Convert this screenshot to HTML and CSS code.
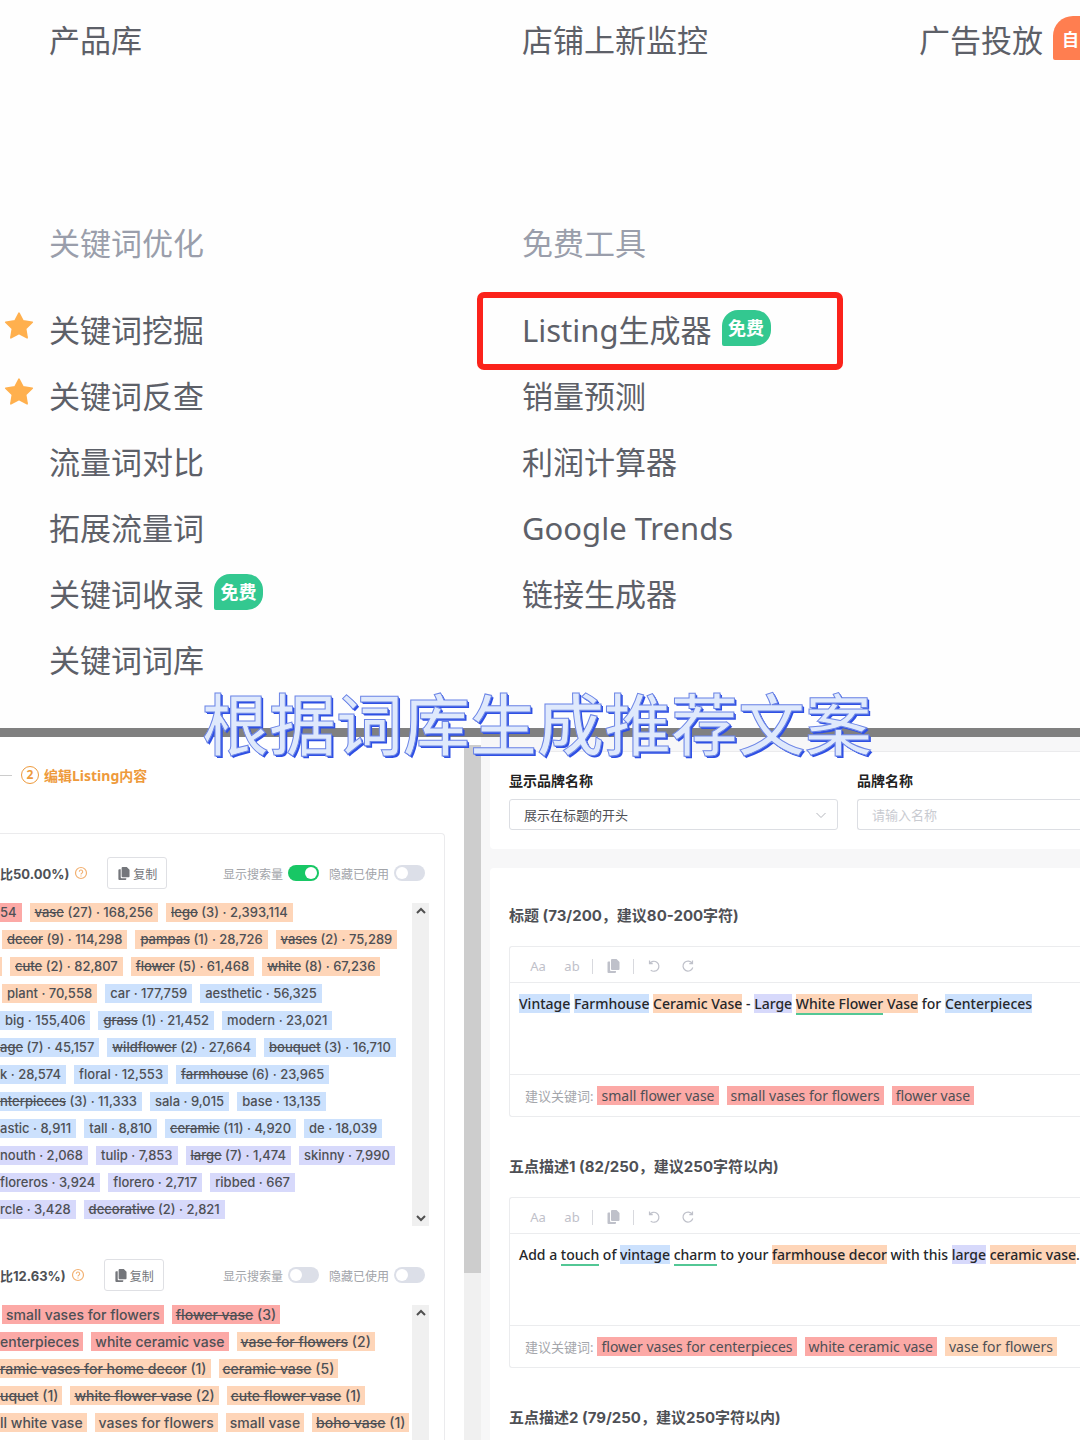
FILE: index.html
```html
<!DOCTYPE html>
<html lang="zh-CN">
<head>
<meta charset="utf-8">
<meta name="viewport" content="width=device-width, initial-scale=1">
<title>Listing生成器</title>
<link rel="stylesheet" href="styles.css">
</head>
<body>
<svg class="sprite" aria-hidden="true">
  <symbol id="star" viewBox="0 0 28 28"><path d="M14 2l3.800 7.200 8.600 1.300-6.200 6 1.400 8.500-7.600-4-7.600 4 1.400-8.500-6.200-6 8.600-1.300z" fill="#ffb04e" stroke="#ffb04e" stroke-width="1.500" stroke-linejoin="round"/></symbol>
  <symbol id="copy" viewBox="0 0 14 14"><path d="M6 0h4.500l3 3v7a1 1 0 0 1-1 1h-6.500a1 1 0 0 1-1-1v-9a1 1 0 0 1 1-1z" fill="currentColor"/><path d="M4 2.500h-1.500a1 1 0 0 0-1 1v9.500a1 1 0 0 0 1 1h6.500a1 1 0 0 0 1-1v-1h-5a1 1 0 0 1-1-1z" fill="currentColor"/></symbol>
  <symbol id="undo" viewBox="0 0 14 14"><path d="M2.500 1.500v3.200h3.200M2.700 4.500a5 5 0 1 1 1 6.600" fill="none" stroke="currentColor" stroke-width="1.200"/></symbol>
  <symbol id="redo" viewBox="0 0 14 14"><path d="M11.500 1.500v3.200h-3.200M11.300 4.500a5 5 0 1 0 .5 4" fill="none" stroke="currentColor" stroke-width="1.200"/></symbol>
  <symbol id="help" viewBox="0 0 14 14"><circle cx="7" cy="7" r="5.500" fill="none" stroke="#f2b071" stroke-width="1.200"/><path d="M5.300 5.700a1.700 1.700 0 1 1 2.500 1.500q-.8.400-.8 1.200M7 9.400v1.100" fill="none" stroke="#f2b071" stroke-width="1.100"/></symbol>
  <symbol id="up" viewBox="0 0 10 10"><path d="M1 7l4-4 4 4" fill="none" stroke="currentColor" stroke-width="2"/></symbol>
  <symbol id="down" viewBox="0 0 10 10"><path d="M1 3l4 4 4-4" fill="none" stroke="currentColor" stroke-width="2"/></symbol>
  <symbol id="chevron" viewBox="0 0 10 10"><path d="M.5 3l4.500 4.500 4.500-4.500" fill="none" stroke="currentColor"/></symbol>
</svg>

<nav class="menu">
  <a class="menu-link" href="#">产品库</a>
  <a class="menu-link" href="#">店铺上新监控</a>
  <a class="menu-link" href="#">广告投放<span class="badge badge-hot">自</span></a>

  <section class="group">
    <h2 class="group-title">关键词优化</h2>
    <ul class="group-list">
      <li><svg class="star"><use href="#star"/></svg><a class="menu-link" href="#">关键词挖掘</a></li>
      <li><svg class="star"><use href="#star"/></svg><a class="menu-link" href="#">关键词反查</a></li>
      <li><a class="menu-link" href="#">流量词对比</a></li>
      <li><a class="menu-link" href="#">拓展流量词</a></li>
      <li><a class="menu-link" href="#">关键词收录<span class="badge">免费</span></a></li>
      <li><a class="menu-link" href="#">关键词词库</a></li>
    </ul>
  </section>
  <section class="group">
    <h2 class="group-title">免费工具</h2>
    <ul class="group-list">
      <li><a class="menu-link" href="#">Listing生成器<span class="badge">免费</span></a><span class="marker"></span></li>
      <li><a class="menu-link" href="#">销量预测</a></li>
      <li><a class="menu-link" href="#">利润计算器</a></li>
      <li><a class="menu-link" href="#">Google Trends</a></li>
      <li><a class="menu-link" href="#">链接生成器</a></li>
    </ul>
  </section>
</nav>

<div class="divider"><p class="caption">根据词库生成推荐文案</p></div>

<main class="workspace">
  <aside class="keywords">
    <div class="step"><span class="step-line"></span><span class="step-num">2</span><span>编辑Listing内容</span></div>
    <div class="panel">
      <header class="panel-head">
        <strong>比50.00%)</strong><svg class="help"><use href="#help"/></svg>
        <button class="copy-btn" type="button"><svg><use href="#copy"/></svg>复制</button>
        <span class="toggles">
          <label>显示搜索量<input class="switch" type="checkbox" checked></label>
          <label>隐藏已使用<input class="switch" type="checkbox"></label>
        </span>
      </header>
      <div class="scroller">
        <div class="rows words">
          <div class="row"><span class="tag red cut">54</span><span class="tag orange"><s>vase</s> (27) · 168,256</span><span class="tag orange"><s>lego</s> (3) · 2,393,114</span></div>
          <div class="row"><span class="tag gap"></span><span class="tag orange"><s>decor</s> (9) · 114,298</span><span class="tag orange"><s>pampas</s> (1) · 28,726</span><span class="tag orange"><s>vases</s> (2) · 75,289</span></div>
          <div class="row"><span class="tag orange sliver"></span><span class="tag orange"><s>cute</s> (2) · 82,807</span><span class="tag orange"><s>flower</s> (5) · 61,468</span><span class="tag orange"><s>white</s> (8) · 67,236</span></div>
          <div class="row"><span class="tag gap"></span><span class="tag orange">plant · 70,558</span><span class="tag blue">car · 177,759</span><span class="tag blue">aesthetic · 56,325</span></div>
          <div class="row"><span class="tag blue">big · 155,406</span><span class="tag blue"><s>grass</s> (1) · 21,452</span><span class="tag blue">modern · 23,021</span></div>
          <div class="row"><span class="tag blue cut"><s>age</s> (7) · 45,157</span><span class="tag blue"><s>wildflower</s> (2) · 27,664</span><span class="tag blue"><s>bouquet</s> (3) · 16,710</span></div>
          <div class="row"><span class="tag blue cut">k · 28,574</span><span class="tag blue">floral · 12,553</span><span class="tag blue"><s>farmhouse</s> (6) · 23,965</span></div>
          <div class="row"><span class="tag blue cut"><s>nterpieces</s> (3) · 11,333</span><span class="tag blue">sala · 9,015</span><span class="tag blue">base · 13,135</span></div>
          <div class="row"><span class="tag blue cut">astic · 8,911</span><span class="tag blue">tall · 8,810</span><span class="tag blue"><s>ceramic</s> (11) · 4,920</span><span class="tag blue">de · 18,039</span></div>
          <div class="row"><span class="tag violet cut">nouth · 2,068</span><span class="tag violet">tulip · 7,853</span><span class="tag violet"><s>large</s> (7) · 1,474</span><span class="tag violet">skinny · 7,990</span></div>
          <div class="row"><span class="tag violet cut">floreros · 3,924</span><span class="tag violet">florero · 2,717</span><span class="tag violet">ribbed · 667</span></div>
          <div class="row"><span class="tag violet cut">rcle · 3,428</span><span class="tag violet"><s>decorative</s> (2) · 2,821</span></div>
        </div>
        <div class="bar"><svg><use href="#up"/></svg><svg><use href="#down"/></svg></div>
      </div>

      <header class="panel-head">
        <strong>比12.63%)</strong><svg class="help"><use href="#help"/></svg>
        <button class="copy-btn" type="button"><svg><use href="#copy"/></svg>复制</button>
        <span class="toggles">
          <label>显示搜索量<input class="switch" type="checkbox"></label>
          <label>隐藏已使用<input class="switch" type="checkbox"></label>
        </span>
      </header>
      <div class="scroller">
        <div class="rows phrases">
          <div class="row"><span class="tag gap"></span><span class="tag red">small vases for flowers</span><span class="tag red"><s>flower vase</s> (3)</span></div>
          <div class="row"><span class="tag red cut">enterpieces</span><span class="tag red">white ceramic vase</span><span class="tag orange"><s>vase for flowers</s> (2)</span></div>
          <div class="row"><span class="tag orange cut"><s>ramic vases for home decor</s> (1)</span><span class="tag orange"><s>ceramic vase</s> (5)</span></div>
          <div class="row"><span class="tag orange cut"><s>uquet</s> (1)</span><span class="tag orange"><s>white flower vase</s> (2)</span><span class="tag orange"><s>cute flower vase</s> (1)</span></div>
          <div class="row"><span class="tag orange cut">ll white vase</span><span class="tag orange">vases for flowers</span><span class="tag orange">small vase</span><span class="tag orange"><s>boho vase</s> (1)</span></div>
        </div>
        <div class="bar"><svg><use href="#up"/></svg></div>
      </div>
    </div>
  </aside>

  <div class="page-bar"></div>

  <section class="editor">
    <form class="card brand">
      <div class="field">
        <label for="brand-pos">显示品牌名称</label>
        <span class="select-wrap"><select id="brand-pos" class="control"><option>展示在标题的开头</option></select><svg class="chevron"><use href="#chevron"/></svg></span>
      </div>
      <div class="field">
        <label for="brand-name">品牌名称</label>
        <input id="brand-name" class="control control-open" type="text" placeholder="请输入名称">
      </div>
    </form>

    <div class="card copywriting">
      <h3>标题 (73/200，建议80-200字符)</h3>
      <div class="box">
        <div class="tools"><button type="button">Aa</button><button type="button">ab</button><i></i><button type="button" aria-label="复制"><svg><use href="#copy"/></svg></button><i></i><button type="button" aria-label="撤销"><svg><use href="#undo"/></svg></button><button type="button" aria-label="重做"><svg><use href="#redo"/></svg></button></div>
        <div class="text" role="textbox" aria-label="标题" contenteditable="true" spellcheck="false"><mark class="blue">Vintage</mark> <mark class="blue">Farmhouse</mark> <mark class="orange">Ceramic Vase</mark> - <mark class="violet">Large</mark> <mark class="orange"><u>White Flower</u> Vase</mark> for <mark class="blue">Centerpieces</mark></div>
        <div class="hints"><span class="hints-label">建议关键词:</span><span class="tag red">small flower vase</span><span class="tag red">small vases for flowers</span><span class="tag red">flower vase</span></div>
      </div>

      <h3>五点描述1 (82/250，建议250字符以内)</h3>
      <div class="box">
        <div class="tools"><button type="button">Aa</button><button type="button">ab</button><i></i><button type="button" aria-label="复制"><svg><use href="#copy"/></svg></button><i></i><button type="button" aria-label="撤销"><svg><use href="#undo"/></svg></button><button type="button" aria-label="重做"><svg><use href="#redo"/></svg></button></div>
        <div class="text" role="textbox" aria-label="五点描述1" contenteditable="true" spellcheck="false">Add a <u>touch</u> of <mark class="blue">vintage</mark> <u>charm</u> to your <mark class="orange">farmhouse decor</mark> with this <mark class="violet">large</mark> <mark class="orange">ceramic vase</mark>.</div>
        <div class="hints"><span class="hints-label">建议关键词:</span><span class="tag red">flower vases for centerpieces</span><span class="tag red">white ceramic vase</span><span class="tag orange">vase for flowers</span></div>
      </div>

      <h3>五点描述2 (79/250，建议250字符以内)</h3>
    </div>
  </section>
</main>
</body>
</html>
```
FILE: styles.css
```css
* { box-sizing: border-box; }

body {
  margin: 0;
  height: 100vh;
  overflow: hidden;
  display: flex;
  flex-direction: column;
  background: #fff;
  color: #4e5055;
  font-family: "Noto Sans", "Noto Sans CJK SC", sans-serif;
  font-size: 13px;
}

.sprite { position: absolute; width: 0; height: 0; }
a { color: inherit; text-decoration: none; }
button, input, select { font: inherit; color: inherit; }

.red { background: #fca9a6; }
.orange { background: #fed5b8; }
.blue { background: #cce1fd; }
.violet { background: #d7d9fb; }

/* Menu */
.menu {
  flex: none;
  display: grid;
  grid-template-columns: minmax(0, 473fr) minmax(0, 397fr) minmax(0, 161fr);
  padding: 7px 0 35px 49px;
  background: #fefefe;
  color: #5d6068;
  font-size: 31px;
  line-height: 66px;
}
.menu-link { display: flex; align-items: center; height: 66px; white-space: nowrap; }
.group { padding-top: 137px; }
.group-title { margin: 0 0 21px; font-size: 31px; font-weight: 400; color: #9a9eab; }
.group-list { margin: 0; padding: 0; list-style: none; }
.group-list li { position: relative; }
.star { position: absolute; left: -45px; top: 14px; width: 30px; height: 30px; }
.marker {
  position: absolute;
  inset: -5px 76px -7px -45px;
  border: 6px solid #fb231b;
  border-radius: 7px;
}
.badge {
  flex: none;
  width: 49px;
  height: 36px;
  margin: 0 0 4px 10px;
  border-radius: 16px 16px 16px 2px;
  background: #33c890;
  color: #fff;
  font-size: 18px;
  font-weight: 700;
  line-height: 36px;
  text-align: center;
}
.badge-hot {
  flex: 1;
  height: 44px;
  padding-left: 9px;
  border-radius: 20px 0 0 2px;
  background: #ff7e50;
  font-size: 17px;
  line-height: 48px;
  text-align: left;
}

/* Divider with caption over it */
.divider { position: relative; z-index: 1; flex: none; height: 9px; background: #808080; }
.caption {
  position: absolute;
  top: -44px;
  left: 0;
  right: 6px;
  margin: 0;
  color: #dfe9fc;
  font-size: 67px;
  font-weight: 500;
  line-height: 80px;
  text-align: center;
  white-space: nowrap;
  -webkit-text-stroke: 1px #6c85e6;
  text-shadow: 1px 1px #2f50e4, 2px 2px #2f50e4;
}

/* Workspace */
.workspace { flex: 1; min-height: 0; display: grid; grid-template-columns: minmax(0, 464fr) 17px minmax(0, 599fr); }
.keywords { overflow: hidden; padding: 28px 19px 0 0; }
.step { display: flex; align-items: center; height: 20px; color: #ee9a3c; font-size: 14px; font-weight: 700; }
.step-line { width: 12px; height: 1px; margin-right: 9px; background: #ccc; }
.step-num {
  width: 18px;
  height: 18px;
  margin-right: 5px;
  border: 1px solid;
  border-radius: 50%;
  font-size: 12px;
  line-height: 16px;
  text-align: center;
}
.panel { margin-top: 48px; padding-top: 23px; border: 1px solid #ebebed; border-width: 1px 1px 0 0; border-radius: 0 4px 0 0; }
.panel-head { display: flex; align-items: center; height: 32px; padding-right: 19px; margin-bottom: 14px; font-family: Inter, "Noto Sans CJK SC", sans-serif; }
.help { width: 14px; height: 14px; margin: 0 19px 0 5px; }
.copy-btn {
  display: flex;
  align-items: center;
  gap: 3px;
  height: 32px;
  padding: 0 9px;
  border: 1px solid #dfe0e4;
  border-radius: 3px;
  background: #fff;
  color: #74767b;
  font-size: 12px;
}
.copy-btn svg { width: 13px; height: 13px; }
.toggles { display: flex; gap: 10px; margin-left: auto; color: #a2a4a9; font-size: 12px; }
.toggles label { display: flex; align-items: center; gap: 5px; }
.switch {
  appearance: none;
  width: 31px;
  height: 16px;
  margin: 0;
  padding: 2px;
  border-radius: 8px;
  background: #dcdfe8;
}
.switch::before { content: ""; display: block; width: 12px; height: 12px; border-radius: 50%; background: #fff; }
.switch:checked { background: #18c765; }
.switch:checked::before { margin-left: auto; }

.scroller { display: flex; justify-content: space-between; height: 323px; margin: 0 15px 33px 0; }
.rows { font-family: Inter, sans-serif; font-weight: 500; }
.row { display: flex; gap: 8px; height: 27px; }
.tag { flex: none; height: 19px; padding: 0 4px; line-height: 19px; white-space: nowrap; }
.words .tag { padding: 0 5px; }
.phrases { font-size: 14px; }
.rows .cut { padding-left: 0; }
.rows .gap { width: 0; padding: 0; margin-right: -6px; }
.rows .sliver { width: 2px; padding: 0; }
.bar { display: flex; flex-direction: column; justify-content: space-between; align-items: center; width: 17px; padding: 3px 0; background: #f0f0f0; }
.bar svg { width: 10px; height: 10px; color: #505050; }
.page-bar { margin-top: 8px; background: linear-gradient(#cdcdcd 528px, #f0f0f0 528px); }

/* Editor */
.editor { display: flex; flex-direction: column; gap: 19px; overflow: hidden; padding: 14px 0 0 9px; background: #f7f7f8; }
.card { background: #fff; padding-left: 19px; border-radius: 4px 0 0 4px; }
.brand { flex: none; display: grid; grid-template-columns: minmax(0, 329fr) minmax(0, 223fr); gap: 19px; height: 98px; padding-top: 19px; border-top: 1px solid #ebebed; }
.field { display: flex; flex-direction: column; gap: 8px; }
.field label { color: #222; font-size: 14px; font-weight: 700; line-height: 20px; }
.select-wrap { position: relative; display: block; }
.control { appearance: none; width: 100%; height: 31px; padding: 0 14px; border: 1px solid #dcdee3; border-radius: 3px; background: #fff; }
.control-open { border-right: 0; border-radius: 3px 0 0 3px; }
.control::placeholder { color: #c9cbd1; }
.chevron { position: absolute; right: 12px; top: 11px; width: 10px; height: 10px; color: #b4b6bc; }

.copywriting { flex: 1; padding-top: 38px; }
.copywriting h3 { margin: 0 0 20px; font-family: Inter, "Noto Sans CJK SC", sans-serif; font-size: 15px; line-height: 20px; }
.box { height: 171px; display: flex; flex-direction: column; margin-bottom: 40px; border: 1px solid #ebecee; border-right: 0; border-radius: 3px 0 0 3px; font-size: 14px; }
.tools { display: flex; align-items: center; height: 36px; padding: 3px 0 0 18px; border-bottom: 1px solid #ebecee; color: #bfc1ca; font-size: 13px; }
.tools button { width: 20px; height: 20px; margin-right: 14px; padding: 0; border: 0; background: none; white-space: nowrap; }
.tools svg { display: block; width: 14px; height: 14px; margin: 0 auto; }
.tools i { width: 1px; height: 15px; margin: 0 10px 0 -4px; background: #d8d9de; }
.text { flex: 1; padding: 12px 0 0 9px; color: #26272a; font-weight: 500; line-height: 18px; white-space: nowrap; outline: 0; }
.text mark { color: inherit; }
.text u { text-decoration: none; box-shadow: 0 2px #53c795; }
.hints { display: flex; align-items: center; gap: 8px; height: 42px; padding-left: 15px; border-top: 1px solid #ebecee; }
.hints-label { margin-right: -4px; color: #a4a6ab; font-size: 13px; }
```
